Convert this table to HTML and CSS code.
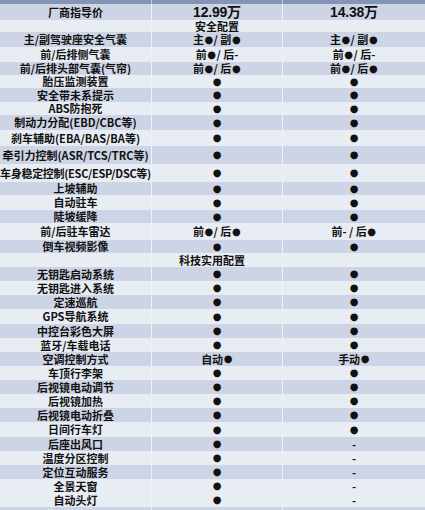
FILE: index.html
```html
<!DOCTYPE html>
<html lang="zh">
<head>
<meta charset="utf-8">
<title>配置对比</title>
<link rel="stylesheet" href="styles.css">
</head>
<body>
<div class="table">
  <div class="row top"><div class="c"></div><div class="c"></div><div class="c"></div></div>
  <div class="row dk h16 price"><div class="c">厂商指导价</div><div class="c">12.99万</div><div class="c">14.38万</div></div>
  <div class="row lt h12 sec"><div class="c"></div><div class="c">安全配置</div><div class="c"></div></div>
  <div class="row dk h15"><div class="c">主/副驾驶座安全气囊</div><div class="c">主<span class="d">●</span> / 副<span class="d">●</span></div><div class="c">主<span class="d">●</span> / 副<span class="d">●</span></div></div>
  <div class="row lt h15"><div class="c">前/后排侧气囊</div><div class="c">前<span class="d">●</span> / 后-</div><div class="c">前<span class="d">●</span> / 后-</div></div>
  <div class="row dk h13"><div class="c">前/后排头部气囊(气帘)</div><div class="c">前<span class="d">●</span> / 后<span class="d">●</span></div><div class="c">前<span class="d">●</span> / 后<span class="d">●</span></div></div>
  <div class="row lt h13"><div class="c">胎压监测装置</div><div class="c"><span class="d">●</span></div><div class="c"><span class="d">●</span></div></div>
  <div class="row dk"><div class="c">安全带未系提示</div><div class="c"><span class="d">●</span></div><div class="c"><span class="d">●</span></div></div>
  <div class="row lt h13"><div class="c">ABS防抱死</div><div class="c"><span class="d">●</span></div><div class="c"><span class="d">●</span></div></div>
  <div class="row dk h15"><div class="c">制动力分配(EBD/CBC等)</div><div class="c"><span class="d">●</span></div><div class="c"><span class="d">●</span></div></div>
  <div class="row lt h16"><div class="c">刹车辅助(EBA/BAS/BA等)</div><div class="c"><span class="d">●</span></div><div class="c"><span class="d">●</span></div></div>
  <div class="row dk h18"><div class="c">牵引力控制(ASR/TCS/TRC等)</div><div class="c"><span class="d">●</span></div><div class="c"><span class="d">●</span></div></div>
  <div class="row lt h18"><div class="c tight">车身稳定控制(ESC/ESP/DSC等)</div><div class="c"><span class="d">●</span></div><div class="c"><span class="d">●</span></div></div>
  <div class="row dk h13"><div class="c">上坡辅助</div><div class="c"><span class="d">●</span></div><div class="c"><span class="d">●</span></div></div>
  <div class="row lt h15"><div class="c">自动驻车</div><div class="c"><span class="d">●</span></div><div class="c"><span class="d">●</span></div></div>
  <div class="row dk h13"><div class="c">陡坡缓降</div><div class="c"><span class="d">●</span></div><div class="c"><span class="d">●</span></div></div>
  <div class="row lt h17"><div class="c">前/后驻车雷达</div><div class="c">前<span class="d">●</span> / 后<span class="d">●</span></div><div class="c">前- / 后<span class="d">●</span></div></div>
  <div class="row dk h13"><div class="c">倒车视频影像</div><div class="c"><span class="d">●</span></div><div class="c"><span class="d">●</span></div></div>
  <div class="row lt sec"><div class="c"></div><div class="c shift">科技实用配置</div><div class="c"></div></div>
  <div class="row dk"><div class="c">无钥匙启动系统</div><div class="c"><span class="d">●</span></div><div class="c"><span class="d">●</span></div></div>
  <div class="row lt"><div class="c">无钥匙进入系统</div><div class="c"><span class="d">●</span></div><div class="c"><span class="d">●</span></div></div>
  <div class="row dk"><div class="c">定速巡航</div><div class="c"><span class="d">●</span></div><div class="c"><span class="d">●</span></div></div>
  <div class="row lt h15"><div class="c">GPS导航系统</div><div class="c"><span class="d">●</span></div><div class="c"><span class="d">●</span></div></div>
  <div class="row dk"><div class="c">中控台彩色大屏</div><div class="c"><span class="d">●</span></div><div class="c"><span class="d">●</span></div></div>
  <div class="row lt"><div class="c">蓝牙/车载电话</div><div class="c"><span class="d">●</span></div><div class="c"><span class="d">●</span></div></div>
  <div class="row dk"><div class="c">空调控制方式</div><div class="c">自动<span class="d">●</span></div><div class="c">手动<span class="d">●</span></div></div>
  <div class="row lt"><div class="c">车顶行李架</div><div class="c"><span class="d">●</span></div><div class="c"><span class="d">●</span></div></div>
  <div class="row dk"><div class="c">后视镜电动调节</div><div class="c"><span class="d">●</span></div><div class="c"><span class="d">●</span></div></div>
  <div class="row lt"><div class="c">后视镜加热</div><div class="c"><span class="d">●</span></div><div class="c"><span class="d">●</span></div></div>
  <div class="row dk"><div class="c">后视镜电动折叠</div><div class="c"><span class="d">●</span></div><div class="c"><span class="d">●</span></div></div>
  <div class="row lt h15"><div class="c">日间行车灯</div><div class="c"><span class="d">●</span></div><div class="c"><span class="d">●</span></div></div>
  <div class="row dk"><div class="c">后座出风口</div><div class="c"><span class="d">●</span></div><div class="c">-</div></div>
  <div class="row lt"><div class="c">温度分区控制</div><div class="c"><span class="d">●</span></div><div class="c">-</div></div>
  <div class="row dk"><div class="c">定位互动服务</div><div class="c"><span class="d">●</span></div><div class="c">-</div></div>
  <div class="row lt"><div class="c">全景天窗</div><div class="c"><span class="d">●</span></div><div class="c">-</div></div>
  <div class="row lt"><div class="c">自动头灯</div><div class="c"><span class="d">●</span></div><div class="c">-</div></div>
  <div class="row dk"><div class="c"></div><div class="c"></div><div class="c"></div></div>
</div>
</body>
</html>
```
FILE: styles.css
```css
html, body {
  margin: 0;
  padding: 0;
  background: #e8ecf3;
}
body {
  width: 425px;
  height: 510px;
  overflow: hidden;
  font-family: "Noto Sans CJK SC", "Noto Sans", sans-serif;
  font-size: 11px;
  color: #111;
}
.table {
  display: flex;
  flex-direction: column;
}
.row {
  display: grid;
  grid-template-columns: 152px 131px 142px;
  height: 14px;
}
.row .c {
  box-sizing: border-box;
  border-right: 1px solid #eef2f9;
  display: flex;
  align-items: center;
  justify-content: center;
  line-height: 1;
  white-space: nowrap;
  font-weight: 700;
}
.row .c:last-child { border-right: 0; }
.top { height: 4px; background: #8494b5; }
.top .c { border-right-color: #c4cde0; }
.dk { background: #cdd4e5; }
.lt { background: #e8ecf3; }
.h12 { height: 12px; }
.h13 { height: 13px; }
.h15 { height: 15px; }
.h16 { height: 16px; }
.h17 { height: 17px; }
.h18 { height: 18px; }
.price .c:nth-child(n+2) {
  font-family: "Liberation Sans", "Noto Sans CJK SC", sans-serif;
  font-size: 14px;
  font-weight: bold;
  letter-spacing: -0.2px;
}
.tight { letter-spacing: -0.3px; }
.shift { padding-right: 10px; }
.d {
  font-family: "DejaVu Sans", sans-serif;
  font-size: 10px;
  line-height: 1;
  margin: 0 0.5px;
}
```
